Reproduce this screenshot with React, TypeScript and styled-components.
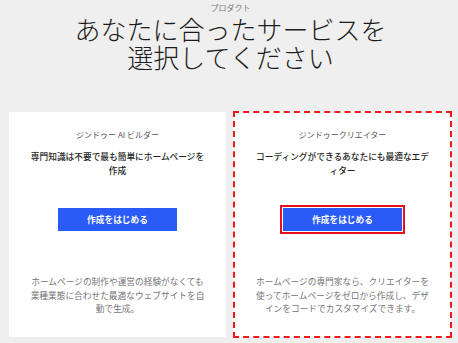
import React from "react";
import styled, { createGlobalStyle } from "styled-components";

const GlobalStyle = createGlobalStyle`
  html, body {
    margin: 0;
    padding: 0;
    background: #efefef;
  }
  body {
    font-family: "Noto Sans CJK JP", "Noto Sans", sans-serif;
    color: #222;
  }
`;

const Page = styled.main`
  width: 458px;
  height: 343px;
  overflow: hidden;
  box-sizing: border-box;
  padding: 2px 6px 0 9px;
`;

const Hero = styled.header`
  display: flex;
  flex-direction: column;
  align-items: center;
  text-align: center;
`;

const Eyebrow = styled.div`
  font-size: 8px;
  line-height: 12px;
  color: #777;
`;

const Title = styled.h1`
  margin: 1px 0 0;
  font-size: 26px;
  line-height: 27.5px;
  font-weight: 300;
  color: #1c1c1c;
`;

const Cards = styled.section`
  display: grid;
  grid-template-columns: 217px 219px;
  column-gap: 7px;
  margin-top: 42px;
`;

const Card = styled.article<{ $focused?: boolean }>`
  box-sizing: border-box;
  height: ${(p) => (p.$focused ? "227px" : "225px")};
  margin-top: ${(p) => (p.$focused ? "-1px" : "0")};
  background: #fff;
  border: ${(p) => (p.$focused ? "2px dashed #f01818" : "none")};
  display: flex;
  flex-direction: column;
  align-items: center;
  text-align: center;
  padding-top: ${(p) => (p.$focused ? "16px" : "17px")};
  line-break: loose;
`;

const Label = styled.div`
  font-size: 8px;
  line-height: 12px;
  color: #555;
`;

const Lead = styled.p`
  width: 178px;
  margin: 9px 0 0;
  font-size: 8.7px;
  line-height: 14px;
  font-weight: 500;
  color: #1f1f1f;
`;

const StartButton = styled.button<{ $focused?: boolean }>`
  margin-top: 30px;
  width: 119px;
  height: 23px;
  border: none;
  background: #2b5bf6;
  color: #fff;
  font-family: inherit;
  font-size: 8.7px;
  font-weight: 700;
  cursor: pointer;
  outline: ${(p) => (p.$focused ? "2px solid #e8101a" : "none")};
  outline-offset: 1px;
`;

const Description = styled.p`
  width: 178px;
  margin: 44px 0 0;
  font-size: 8.7px;
  line-height: 13.7px;
  color: #767676;
`;

type Product = {
  label: string;
  lead: string;
  description: string;
  focused?: boolean;
};

const products: Product[] = [
  {
    label: "ジンドゥー AI ビルダー",
    lead: "専門知識は不要で最も簡単にホームページを作成",
    description:
      "ホームページの制作や運営の経験がなくても業種業態に合わせた最適なウェブサイトを自動で生成。",
  },
  {
    label: "ジンドゥークリエイター",
    lead: "コーディングができるあなたにも最適なエディター",
    description:
      "ホームページの専門家なら、クリエイターを使ってホームページをゼロから作成し、デザインをコードでカスタマイズできます。",
    focused: true,
  },
];

export default function App() {
  return (
    <>
      <GlobalStyle />
      <Page lang="ja">
        <Hero>
          <Eyebrow>プロダクト</Eyebrow>
          <Title>
            あなたに合ったサービスを
            <br />
            選択してください
          </Title>
        </Hero>
        <Cards>
          {products.map((p) => (
            <Card key={p.label} $focused={p.focused}>
              <Label>{p.label}</Label>
              <Lead>{p.lead}</Lead>
              <StartButton $focused={p.focused}>作成をはじめる</StartButton>
              <Description>{p.description}</Description>
            </Card>
          ))}
        </Cards>
      </Page>
    </>
  );
}
